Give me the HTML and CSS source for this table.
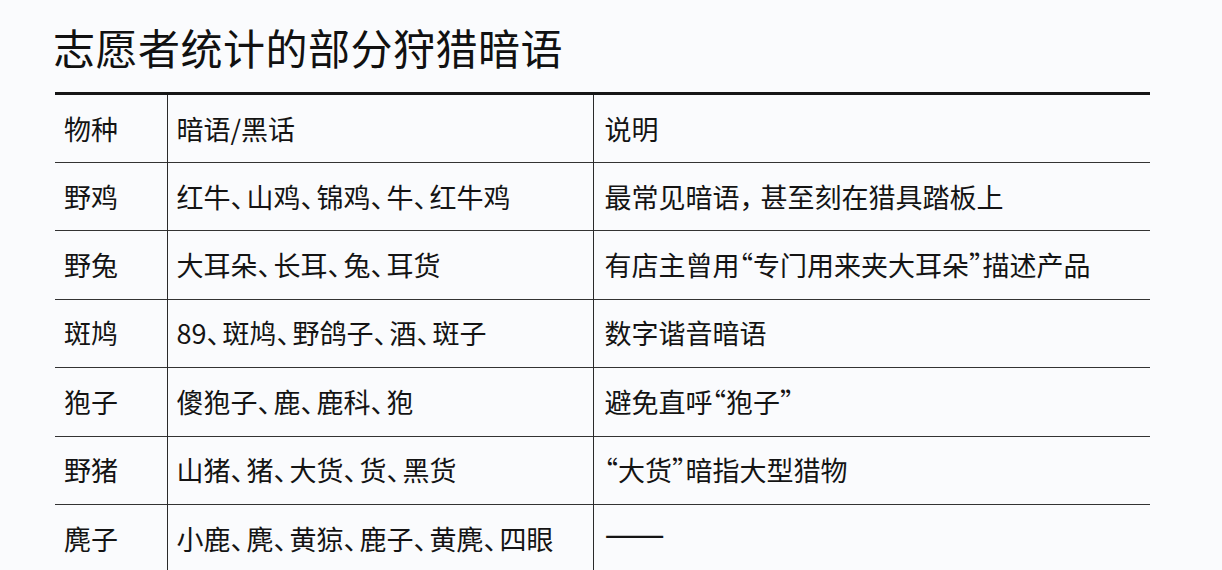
FILE: index.html
```html
<!DOCTYPE html>
<html lang="zh-CN">
<head>
<meta charset="utf-8">
<title>志愿者统计的部分狩猎暗语</title>
<link rel="stylesheet" href="styles.css">
</head>
<body>
<div class="page">
  <h1 class="title">志愿者统计的部分狩猎暗语</h1>
  <table class="grid">
    <colgroup>
      <col class="c1"><col class="c2"><col class="c3">
    </colgroup>
    <tr class="head">
      <td>物种</td>
      <td>暗语/黑话</td>
      <td class="desc">说明</td>
    </tr>
    <tr>
      <td>野鸡</td>
      <td>红牛<span class="p">、</span>山鸡<span class="p">、</span>锦鸡<span class="p">、</span>牛<span class="p">、</span>红牛鸡</td>
      <td class="desc">最常见暗语<span class="cm">，</span>甚至刻在猎具踏板上</td>
    </tr>
    <tr>
      <td>野兔</td>
      <td>大耳朵<span class="p">、</span>长耳<span class="p">、</span>兔<span class="p">、</span>耳货</td>
      <td class="desc">有店主曾用<span class="q">“</span>专门用来夹大耳朵<span class="q">”</span>描述产品</td>
    </tr>
    <tr>
      <td>斑鸠</td>
      <td>89<span class="p">、</span>斑鸠<span class="p">、</span>野鸽子<span class="p">、</span>酒<span class="p">、</span>斑子</td>
      <td class="desc">数字谐音暗语</td>
    </tr>
    <tr>
      <td>狍子</td>
      <td>傻狍子<span class="p">、</span>鹿<span class="p">、</span>鹿科<span class="p">、</span>狍</td>
      <td class="desc">避免直呼<span class="q">“</span>狍子<span class="q">”</span></td>
    </tr>
    <tr>
      <td>野猪</td>
      <td>山猪<span class="p">、</span>猪<span class="p">、</span>大货<span class="p">、</span>货<span class="p">、</span>黑货</td>
      <td class="desc"><span class="q">“</span>大货<span class="q">”</span>暗指大型猎物</td>
    </tr>
    <tr>
      <td>麂子</td>
      <td>小鹿<span class="p">、</span>麂<span class="p">、</span>黄猄<span class="p">、</span>鹿子<span class="p">、</span>黄麂<span class="p">、</span>四眼</td>
      <td class="desc"><span class="dash">——</span></td>
    </tr>
  </table>
</div>
</body>
</html>
```

FILE: styles.css
```css
html, body {
  margin: 0;
  padding: 0;
  overflow: hidden;
  background: #fafbfd;
}

body {
  font-family: "Noto Sans CJK SC", "Noto Sans", sans-serif;
  color: #141414;
}

.page {
  padding: 18px 0 0 55px;
}

.title {
  margin: 0 0 0 -2px;
  font-size: 42px;
  font-weight: 400;
  line-height: 57px;
  color: #111;
  letter-spacing: 0.5px;
}

.grid {
  margin-top: 17px;
  width: 1095px;
  border-collapse: collapse;
  border-top: 3px solid #161616;
  font-size: 27px;
  table-layout: fixed;
}

.c1 { width: 112px; }
.c2 { width: 426px; }
.c3 { width: 557px; }

.grid td {
  height: 68.4px;
  padding: 0 0 0 9px;
  border-top: 1px solid #333;
  border-left: 1.5px solid #2a2a2a;
  vertical-align: middle;
  line-height: 30px;
  white-space: nowrap;
  box-sizing: border-box;
}

.grid td:first-child {
  border-left: none;
}

.grid .head td {
  border-top: none;
  height: 69px;
}

.grid td.desc {
  padding-left: 11px;
}

.p {
  letter-spacing: -11px;
}

.cm {
  letter-spacing: -6px;
}

.q {
  font-feature-settings: "halt";
}

.dash {
  display: inline-block;
  font-size: 36px;
  line-height: 30px;
  letter-spacing: -1px;
  vertical-align: top;
  margin-top: -8px;
}
```
